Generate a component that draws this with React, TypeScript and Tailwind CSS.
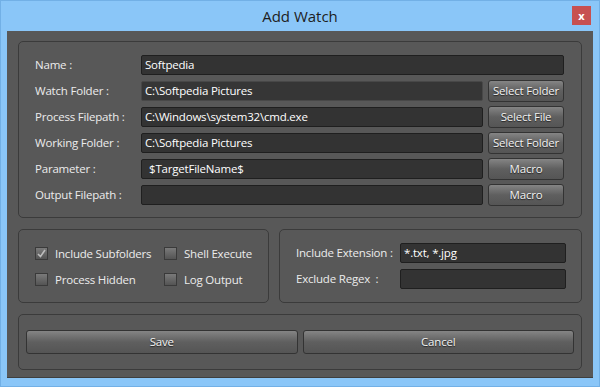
const font = { fontFamily: '"Open Sans", "Noto Sans", sans-serif' };

function Field({ value, className = "" }: { value?: string; className?: string }) {
  return (
    <div
      className={`h-[20px] flex items-center px-[3px] bg-[#333333] border border-[#1f1f1f] rounded-[2px] text-[11.5px] tracking-[-0.2px] text-white whitespace-nowrap overflow-hidden ${className}`}
    >
      {value}
    </div>
  );
}

function Btn({ label, className = "" }: { label: string; className?: string }) {
  return (
    <div
      className={`flex items-center justify-center rounded-[3px] border border-[#333] bg-gradient-to-b from-[#858585] via-[#5f5f5f] to-[#555555] text-[11.5px] tracking-[-0.2px] text-[#f2f2f2] whitespace-nowrap [text-shadow:0_1px_1px_#222] ${className}`}
    >
      {label}
    </div>
  );
}

function Check({ label, checked }: { label: string; checked?: boolean }) {
  return (
    <div className="flex items-center gap-[7px] h-[13px]">
      <div className="w-[13px] h-[13px] border border-[#3a3a3a] bg-gradient-to-b from-[#7a7a7a] to-[#545454] flex items-center justify-center">
        {checked && (
          <svg width="11" height="11" viewBox="0 0 11 11">
            <path d="M2 6 L4.5 8.5 L9 2" fill="none" stroke="#bdbdbd" strokeWidth="1.6" />
          </svg>
        )}
      </div>
      <span className="text-[11.5px] tracking-[-0.2px] text-[#ececec] whitespace-nowrap">{label}</span>
    </div>
  );
}

const rows = [
  { label: "Name :", value: "Softpedia" },
  { label: "Watch Folder :", value: "C:\\Softpedia Pictures", btn: "Select Folder", dim: true },
  { label: "Process Filepath :", value: "C:\\Windows\\system32\\cmd.exe", btn: "Select File" },
  { label: "Working Folder :", value: "C:\\Softpedia Pictures", btn: "Select Folder" },
  { label: "Parameter :", value: "$TargetFileName$", btn: "Macro", indent: true },
  { label: "Output Filepath :", value: "", btn: "Macro" },
];

const label = "text-[11.5px] tracking-[-0.2px] text-[#ececec] whitespace-nowrap";

export default function App() {
  return (
    <div
      style={font}
      className="w-[600px] h-[387px] bg-[#8ac6f8] border border-[#72b0e6] flex flex-col"
    >
      {/* Title bar */}
      <div className="h-[30px] relative flex items-center justify-center shrink-0">
        <span className="text-[15px] text-[#1d1d1d] mt-[1px]">Add Watch</span>
        <div className="absolute right-[8px] top-[5px] w-[19px] h-[19px] bg-[#c75050] flex items-center justify-center text-white text-[11px] font-bold leading-none">
          x
        </div>
      </div>

      {/* Body */}
      <div className="flex-1 mx-[6px] mb-[8px] bg-[#585858] border-b border-[#3f3f3f] px-[11px] pt-[10px] flex flex-col gap-[11px]">
        {/* Main fields */}
        <div className="h-[177px] border border-[#3b3b3b] rounded-[5px] pl-[16px] pr-[17px] pt-[13px] flex flex-col gap-[6px]">
          {rows.map((r) => (
            <div key={r.label} className="flex items-center h-[20px]">
              <span className={`w-[106px] shrink-0 ${label}`}>{r.label}</span>
              {r.btn ? (
                <>
                  <Field
                    value={r.value}
                    className={`w-[342px] ${r.dim ? "border-[#484848] bg-[#363636]" : ""} ${r.indent ? "pl-[7px]" : ""}`}
                  />
                  <Btn label={r.btn} className="ml-[5px] w-[76px] h-[22px]" />
                </>
              ) : (
                <Field value={r.value} className="flex-1" />
              )}
            </div>
          ))}
        </div>

        {/* Options */}
        <div className="flex gap-[10px] h-[74px]">
          <div className="w-[251px] border border-[#3b3b3b] rounded-[5px] pl-[16px] pt-[17px] grid grid-cols-[129px_1fr] gap-y-[13px] content-start">
            <Check label="Include Subfolders" checked />
            <Check label="Shell Execute" />
            <Check label="Process Hidden" />
            <Check label="Log Output" />
          </div>
          <div className="flex-1 border border-[#3b3b3b] rounded-[5px] pl-[16px] pt-[13px] flex flex-col gap-[6px]">
            <div className="flex items-center h-[20px]">
              <span className={`w-[104px] ${label}`}>Include Extension :</span>
              <Field value="*.txt, *.jpg" className="w-[166px]" />
            </div>
            <div className="flex items-center h-[20px]">
              <span className={`w-[104px] ${label}`}>Exclude Regex&nbsp; :</span>
              <Field className="w-[166px]" />
            </div>
          </div>
        </div>

        {/* Actions */}
        <div className="h-[56px] border border-[#3b3b3b] rounded-[5px] pl-[7px] pr-[7px] flex items-center gap-[5px]">
          <Btn label="Save" className="flex-1 h-[24px]" />
          <Btn label="Cancel" className="flex-1 h-[24px]" />
        </div>
      </div>
    </div>
  );
}
